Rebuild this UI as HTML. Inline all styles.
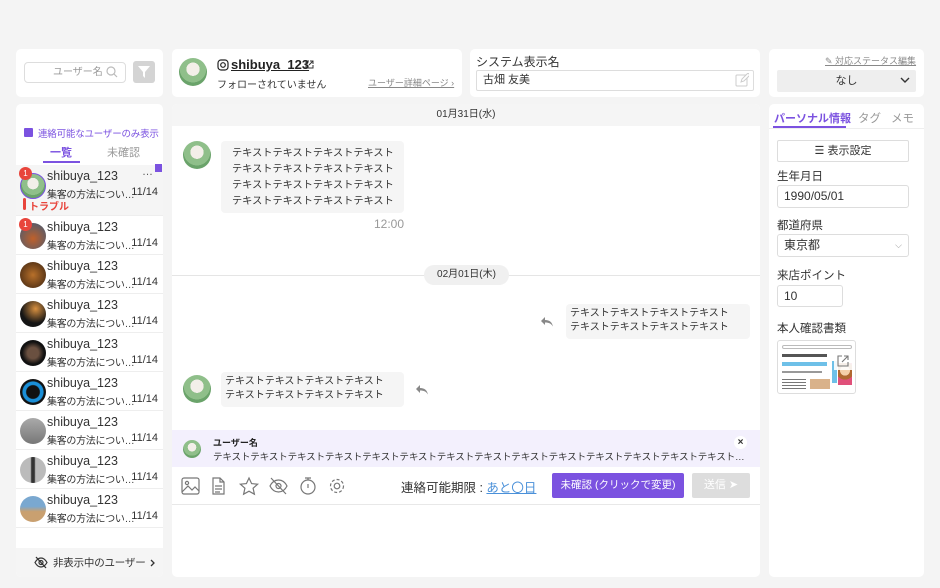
<!DOCTYPE html>
<html><head><meta charset="utf-8">
<style>
*{box-sizing:border-box;margin:0;padding:0}
body{width:940px;height:588px;background:#f4f4f4;font-family:"Liberation Sans","Noto Sans CJK JP",sans-serif;color:#333;position:relative;overflow:hidden;font-size:12px}
.p{position:absolute;background:#fff;border-radius:5px}
.a{position:absolute;white-space:nowrap}
.av{position:absolute;border-radius:50%;background:radial-gradient(circle at 50% 40%,#f3efe9 0 30%,#8fbf8a 31% 60%,#6aa36a 61%)}
.row{position:absolute;left:0;width:147px;height:39px;border-bottom:1px solid #eee}
.row .nm{position:absolute;left:31px;top:4px;font-size:12.5px;color:#333}
.row .ms{position:absolute;left:31px;top:21px;font-size:10px;color:#333;white-space:nowrap;letter-spacing:-0.3px}
.row .dt{position:absolute;right:5px;top:21px;font-size:11px;color:#333}
.row .ic{position:absolute;left:4px;top:7px;width:26px;height:26px;border-radius:50%}
.badge{position:absolute;width:13px;height:13px;border-radius:50%;background:#e8453c;color:#fff;font-size:8px;text-align:center;line-height:13px}
.bub{position:absolute;background:#f5f5f5;border-radius:4px;color:#333;white-space:nowrap}
.lbl{position:absolute;left:8px;font-size:11.5px;color:#333;white-space:nowrap}
.inp{position:absolute;left:8px;border:1px solid #ddd;border-radius:3px;background:#fff;font-size:12px;padding-left:6px;line-height:21px}
</style></head><body>

<div class="p" style="left:16px;top:49px;width:147px;height:48px">
 <div class="a" style="left:8px;top:13px;width:102px;height:21px;border:1px solid #ddd;border-radius:4px;font-size:10px;color:#999;padding-left:28px;line-height:19px">ユーザー名</div>
 <svg class="a" style="left:90px;top:17px" width="12" height="12" viewBox="0 0 12 12"><circle cx="5" cy="5" r="4" fill="none" stroke="#bbb" stroke-width="1.2"/><path d="M8 8l3 3" stroke="#bbb" stroke-width="1.2"/></svg>
 <div class="a" style="left:117px;top:12px;width:22px;height:22px;background:#d4d4d4;border-radius:3px">
  <svg class="a" style="left:5px;top:5px" width="12" height="12" viewBox="0 0 12 12"><path d="M0 0h12L7 6v6L5 10V6z" fill="#fff"/></svg></div>
</div>

<div class="p" style="left:16px;top:104px;width:147px;height:473px;overflow:hidden">
 <div class="a" style="left:8px;top:24px;width:9px;height:9px;background:#7b52e0;border-radius:1px"></div>
 <div class="a" style="left:22px;top:22px;font-size:9.5px;color:#7b52e0;letter-spacing:-0.2px">連絡可能なユーザーのみ表示</div>
 <div class="a" style="left:34px;top:40px;font-size:11px;color:#7b52e0;font-weight:bold">一覧</div>
 <div class="a" style="left:27px;top:57px;width:37px;height:2px;background:#7b52e0"></div>
 <div class="a" style="left:91px;top:40px;font-size:11px;color:#999">未確認</div>
 <div class="row" style="top:61px;height:51px;background:#f5f5f5">
  <div class="ic av" style="left:4px;top:8px;border:1.5px solid #7b52e0"></div>
  <div class="badge" style="left:3px;top:2px">1</div>
  <div class="nm">shibuya_123</div><div class="ms">集客の方法につい…</div><div class="dt">11/14</div>
  <div class="a" style="left:126px;top:1px;color:#555;font-size:11px">…</div>
  <div class="a" style="left:139px;top:-1px;width:7px;height:8px;background:#7b52e0"></div>
  <div class="a" style="left:7px;top:33px;width:3px;height:12px;background:#e8453c;border-radius:2px"></div>
  <div class="a" style="left:13px;top:33px;font-size:10px;color:#e8453c;font-weight:bold">トラブル</div>
 </div>
 <div class="row" style="top:112px"><div class="ic" style="background:radial-gradient(circle at 50% 60%,#c0602a,#3c5a7a)"></div><div class="badge" style="left:3px;top:2px">1</div><div class="nm">shibuya_123</div><div class="ms">集客の方法につい…</div><div class="dt">11/14</div></div>
 <div class="row" style="top:151px"><div class="ic" style="background:radial-gradient(circle,#b8702a,#3a2210)"></div><div class="nm">shibuya_123</div><div class="ms">集客の方法につい…</div><div class="dt">11/14</div></div>
 <div class="row" style="top:190px"><div class="ic" style="background:radial-gradient(circle at 60% 30%,#d89040,#151515 60%)"></div><div class="nm">shibuya_123</div><div class="ms">集客の方法につい…</div><div class="dt">11/14</div></div>
 <div class="row" style="top:229px"><div class="ic" style="background:radial-gradient(circle,#6a5040 30%,#111 60%)"></div><div class="nm">shibuya_123</div><div class="ms">集客の方法につい…</div><div class="dt">11/14</div></div>
 <div class="row" style="top:268px"><div class="ic" style="background:radial-gradient(circle,#111 35%,#1a8fd8 40% 55%,#111 60%)"></div><div class="nm">shibuya_123</div><div class="ms">集客の方法につい…</div><div class="dt">11/14</div></div>
 <div class="row" style="top:307px"><div class="ic" style="background:linear-gradient(#aaa,#777)"></div><div class="nm">shibuya_123</div><div class="ms">集客の方法につい…</div><div class="dt">11/14</div></div>
 <div class="row" style="top:346px"><div class="ic" style="background:linear-gradient(90deg,#bbb 40%,#333 45% 55%,#bbb 60%)"></div><div class="nm">shibuya_123</div><div class="ms">集客の方法につい…</div><div class="dt">11/14</div></div>
 <div class="row" style="top:385px"><div class="ic" style="background:linear-gradient(#7aa8d0 40%,#c9a070 60%)"></div><div class="nm">shibuya_123</div><div class="ms">集客の方法につい…</div><div class="dt">11/14</div></div>
 <div class="a" style="left:0;top:444px;width:147px;height:29px;background:#f5f5f5">
  <svg class="a" style="left:18px;top:8px" width="14" height="13" viewBox="0 0 14 13"><path d="M1 6.5C3 3 5 2 7 2s4 1 6 4.5C11 10 9 11 7 11S3 10 1 6.5z" fill="none" stroke="#333" stroke-width="1.2"/><circle cx="7" cy="6.5" r="2" fill="none" stroke="#333" stroke-width="1.2"/><path d="M2 1l10 11" stroke="#333" stroke-width="1.3"/></svg>
  <div class="a" style="left:37px;top:7px;font-size:10.5px;color:#333;letter-spacing:-0.2px">非表示中のユーザー</div>
  <svg class="a" style="left:134px;top:11px" width="6" height="8" viewBox="0 0 6 8"><path d="M1 1l3 3-3 3" fill="none" stroke="#333" stroke-width="1.3"/></svg>
 </div>
</div>

<div class="p" style="left:172px;top:49px;width:290px;height:48px">
 <div class="av" style="left:7px;top:9px;width:28px;height:28px"></div>
 <svg class="a" style="left:45px;top:10px" width="12" height="12" viewBox="0 0 12 12"><rect x="1" y="1" width="10" height="10" rx="3" fill="none" stroke="#222" stroke-width="1.2"/><circle cx="6" cy="6" r="2.3" fill="none" stroke="#222" stroke-width="1.2"/></svg>
 <div class="a" style="left:59px;top:8px;font-size:13px;font-weight:bold;text-decoration:underline;color:#222">shibuya_123</div>
 <svg class="a" style="left:133px;top:11px" width="9" height="9" viewBox="0 0 9 9"><path d="M4 1H1v7h7V5 M5 1h3v3 M8 1L4 5" fill="none" stroke="#333"/></svg>
 <div class="a" style="left:45px;top:27px;font-size:10px;color:#333">フォローされていません</div>
 <div class="a" style="left:196px;top:27px;font-size:9px;color:#888;text-decoration:underline">ユーザー詳細ページ ›</div>
</div>

<div class="p" style="left:470px;top:49px;width:290px;height:48px">
 <div class="a" style="left:6px;top:4px;font-size:12px">システム表示名</div>
 <div class="a" style="left:6px;top:21px;width:278px;height:21px;border:1px solid #ddd;border-radius:2px;font-size:11px;padding-left:6px;line-height:19px">古畑 友美</div>
 <svg class="a" style="left:265px;top:24px" width="14" height="14" viewBox="0 0 14 14"><rect x="1" y="2" width="11" height="11" rx="1" fill="none" stroke="#ccc"/><path d="M6 9l1-3 6-6 2 2-6 6z" fill="#fff" stroke="#ccc"/></svg>
</div>

<div class="p" style="left:769px;top:49px;width:155px;height:48px">
 <div class="a" style="left:56px;top:5px;font-size:9px;color:#888;text-decoration:underline">✎ 対応ステータス編集</div>
 <div class="a" style="left:8px;top:21px;width:139px;height:22px;background:#eee;border-radius:2px;font-size:11px;text-align:center;line-height:22px">なし</div>
 <svg class="a" style="left:131px;top:28px" width="10" height="7" viewBox="0 0 10 7"><path d="M1 1l4 4 4-4" fill="none" stroke="#333" stroke-width="1.4"/></svg>
</div>

<div class="p" style="left:172px;top:104px;width:588px;height:473px;overflow:hidden">
 <div class="a" style="left:0;top:0;width:588px;height:22px;background:#f5f5f5;font-size:10px;text-align:center;line-height:22px">01月31日(水)</div>
 <div class="av" style="left:11px;top:37px;width:28px;height:28px"></div>
 <div class="bub" style="left:49px;top:37px;width:183px;height:72px;padding:5px 0 0 11px;font-size:10.2px;line-height:16px">テキストテキストテキストテキスト<br>テキストテキストテキストテキスト<br>テキストテキストテキストテキスト<br>テキストテキストテキストテキスト</div>
 <div class="a" style="left:202px;top:113px;font-size:12px;color:#999">12:00</div>
 <div class="a" style="left:0;top:171px;width:588px;height:1px;background:#e5e5e5"></div>
 <div class="a" style="left:252px;top:161px;width:85px;height:20px;background:#f0f0f0;border-radius:10px;font-size:10px;text-align:center;line-height:20px">02月01日(木)</div>
 <svg class="a" style="left:368px;top:212px" width="14" height="12" viewBox="0 0 14 12"><path d="M5 1L1 5l4 4V6.5c4 0 6 1 8 4-1-4-3-6.5-8-6.5V1z" fill="#888"/></svg>
 <div class="bub" style="left:394px;top:200px;width:184px;height:35px;font-size:10px;line-height:14px;padding:3px 4px">テキストテキストテキストテキスト<br>テキストテキストテキストテキスト</div>
 <div class="av" style="left:11px;top:271px;width:28px;height:28px"></div>
 <div class="bub" style="left:49px;top:268px;width:183px;height:35px;font-size:10px;line-height:14px;padding:3px 4px">テキストテキストテキストテキスト<br>テキストテキストテキストテキスト</div>
 <svg class="a" style="left:243px;top:280px" width="14" height="12" viewBox="0 0 14 12"><path d="M5 1L1 5l4 4V6.5c4 0 6 1 8 4-1-4-3-6.5-8-6.5V1z" fill="#888"/></svg>
 <div class="a" style="left:0;top:326px;width:588px;height:37px;background:#f3f0fd">
  <div class="av" style="left:11px;top:10px;width:18px;height:18px"></div>
  <div class="a" style="left:41px;top:6px;font-size:9px;font-weight:bold;color:#222">ユーザー名</div>
  <div class="a" style="left:41px;top:19px;font-size:9.6px;color:#333;letter-spacing:-0.2px">テキストテキストテキストテキストテキストテキストテキストテキストテキストテキストテキストテキストテキストテキスト…</div>
  <div class="a" style="left:562px;top:6px;width:13px;height:13px;background:#fff;border-radius:50%;font-size:10px;text-align:center;line-height:13px;font-weight:bold">×</div>
 </div>
 <div class="a" style="left:0;top:400px;width:588px;height:1px;background:#e8e8e8"></div>
 <svg class="a" style="left:9px;top:372px" width="170" height="20" viewBox="0 0 170 20" fill="none" stroke="#777" stroke-width="1.2">
  <rect x="1" y="2" width="17" height="16" rx="2"/><circle cx="6" cy="7" r="1.6"/><path d="M1 16l6-6 4 4 3-3 4 4"/>
  <path d="M32 2h7l4 4v12H32z M39 2v4h4 M34 10h7 M34 13h7 M34 16h5"/>
  <path d="M68 2l2.6 5.6 6 .6-4.5 4 1.3 6-5.4-3-5.4 3 1.3-6-4.5-4 6-.6z"/>
  <path d="M89 10c2-4 5-6 8.5-6s6.5 2 8.5 6c-2 4-5 6-8.5 6s-6.5-2-8.5-6z M90 2l15 16"/><circle cx="97.5" cy="10" r="2.5"/>
  <circle cx="127" cy="11" r="7"/><path d="M124 2h6 M127 2v2 M127 8v4"/>
  <circle cx="156" cy="10" r="2.8"/><circle cx="156" cy="10" r="6.5" stroke-dasharray="3 2"/>
 </svg>
 <div class="a" style="left:229px;top:373px;font-size:12.5px;color:#333">連絡可能期限 : <span style="color:#4a90d9;text-decoration:underline">あと〇日</span></div>
 <div class="a" style="left:380px;top:369px;width:132px;height:25px;background:#7b52e0;border-radius:2px;color:#fff;font-size:10.5px;text-align:center;line-height:25px">未確認 (クリックで変更)</div>
 <div class="a" style="left:520px;top:369px;width:58px;height:25px;background:#ddd;border-radius:2px;color:#fff;font-size:11px;text-align:center;line-height:25px">送信 ➤</div>
</div>

<div class="p" style="left:769px;top:104px;width:155px;height:473px">
 <div class="a" style="left:5px;top:6px;font-size:11px;color:#7b52e0;font-weight:bold">パーソナル情報</div>
 <div class="a" style="left:4px;top:22px;width:73px;height:2px;background:#7b52e0"></div>
 <div class="a" style="left:0;top:24px;width:155px;height:1px;background:#eee"></div>
 <div class="a" style="left:89px;top:6px;font-size:11.5px;color:#999">タグ</div>
 <div class="a" style="left:122px;top:6px;font-size:11.5px;color:#999">メモ</div>
 <div class="a" style="left:8px;top:36px;width:132px;height:22px;border:1px solid #ddd;border-radius:2px;font-size:11px;text-align:center;line-height:20px">☰ 表示設定</div>
 <div class="lbl" style="top:64px">生年月日</div>
 <div class="inp" style="top:81px;width:132px;height:23px">1990/05/01</div>
 <div class="lbl" style="top:113px">都道府県</div>
 <div class="inp" style="top:130px;width:132px;height:23px">東京都<span style="position:absolute;right:6px;color:#999;font-size:9px">⌵</span></div>
 <div class="lbl" style="top:163px">来店ポイント</div>
 <div class="inp" style="top:181px;width:66px;height:22px">10</div>
 <div class="lbl" style="top:216px">本人確認書類</div>
 <div class="a" style="left:8px;top:236px;width:79px;height:54px;border:1px solid #ddd;border-radius:3px;background:#fff;overflow:hidden">
  <div class="a" style="left:4px;top:4px;width:70px;height:4px;border:1px solid #bbb;border-radius:2px"></div>
  <div class="a" style="left:4px;top:13px;width:45px;height:3px;background:#555"></div>
  <div class="a" style="left:4px;top:21px;width:45px;height:4px;background:#6ec0e8"></div>
  <div class="a" style="left:4px;top:30px;width:40px;height:2px;background:#999"></div>
  <div class="a" style="left:4px;top:38px;width:24px;height:10px;background:repeating-linear-gradient(#777 0 1px,#fff 1px 3px)"></div>
  <div class="a" style="left:32px;top:38px;width:20px;height:10px;background:#d9b28a"></div>
  <div class="a" style="left:54px;top:20px;width:5px;height:22px;background:#6ec0e8"></div>
  <div class="a" style="left:60px;top:22px;width:14px;height:22px;background:radial-gradient(circle at 50% 35%,#f5cfa8 30%,#b06830 32% 55%,#e0507a 57%)"></div>
  <div class="a" style="left:56px;top:12px;width:18px;height:17px;background:rgba(255,255,255,.9)"></div>
  <svg class="a" style="left:59px;top:14px" width="12" height="12" viewBox="0 0 12 12"><path d="M5 1H1v10h10V7 M7 1h4v4 M11 1L5 7" fill="none" stroke="#777" stroke-width="1.1"/></svg>
 </div>
</div>
</body></html>
